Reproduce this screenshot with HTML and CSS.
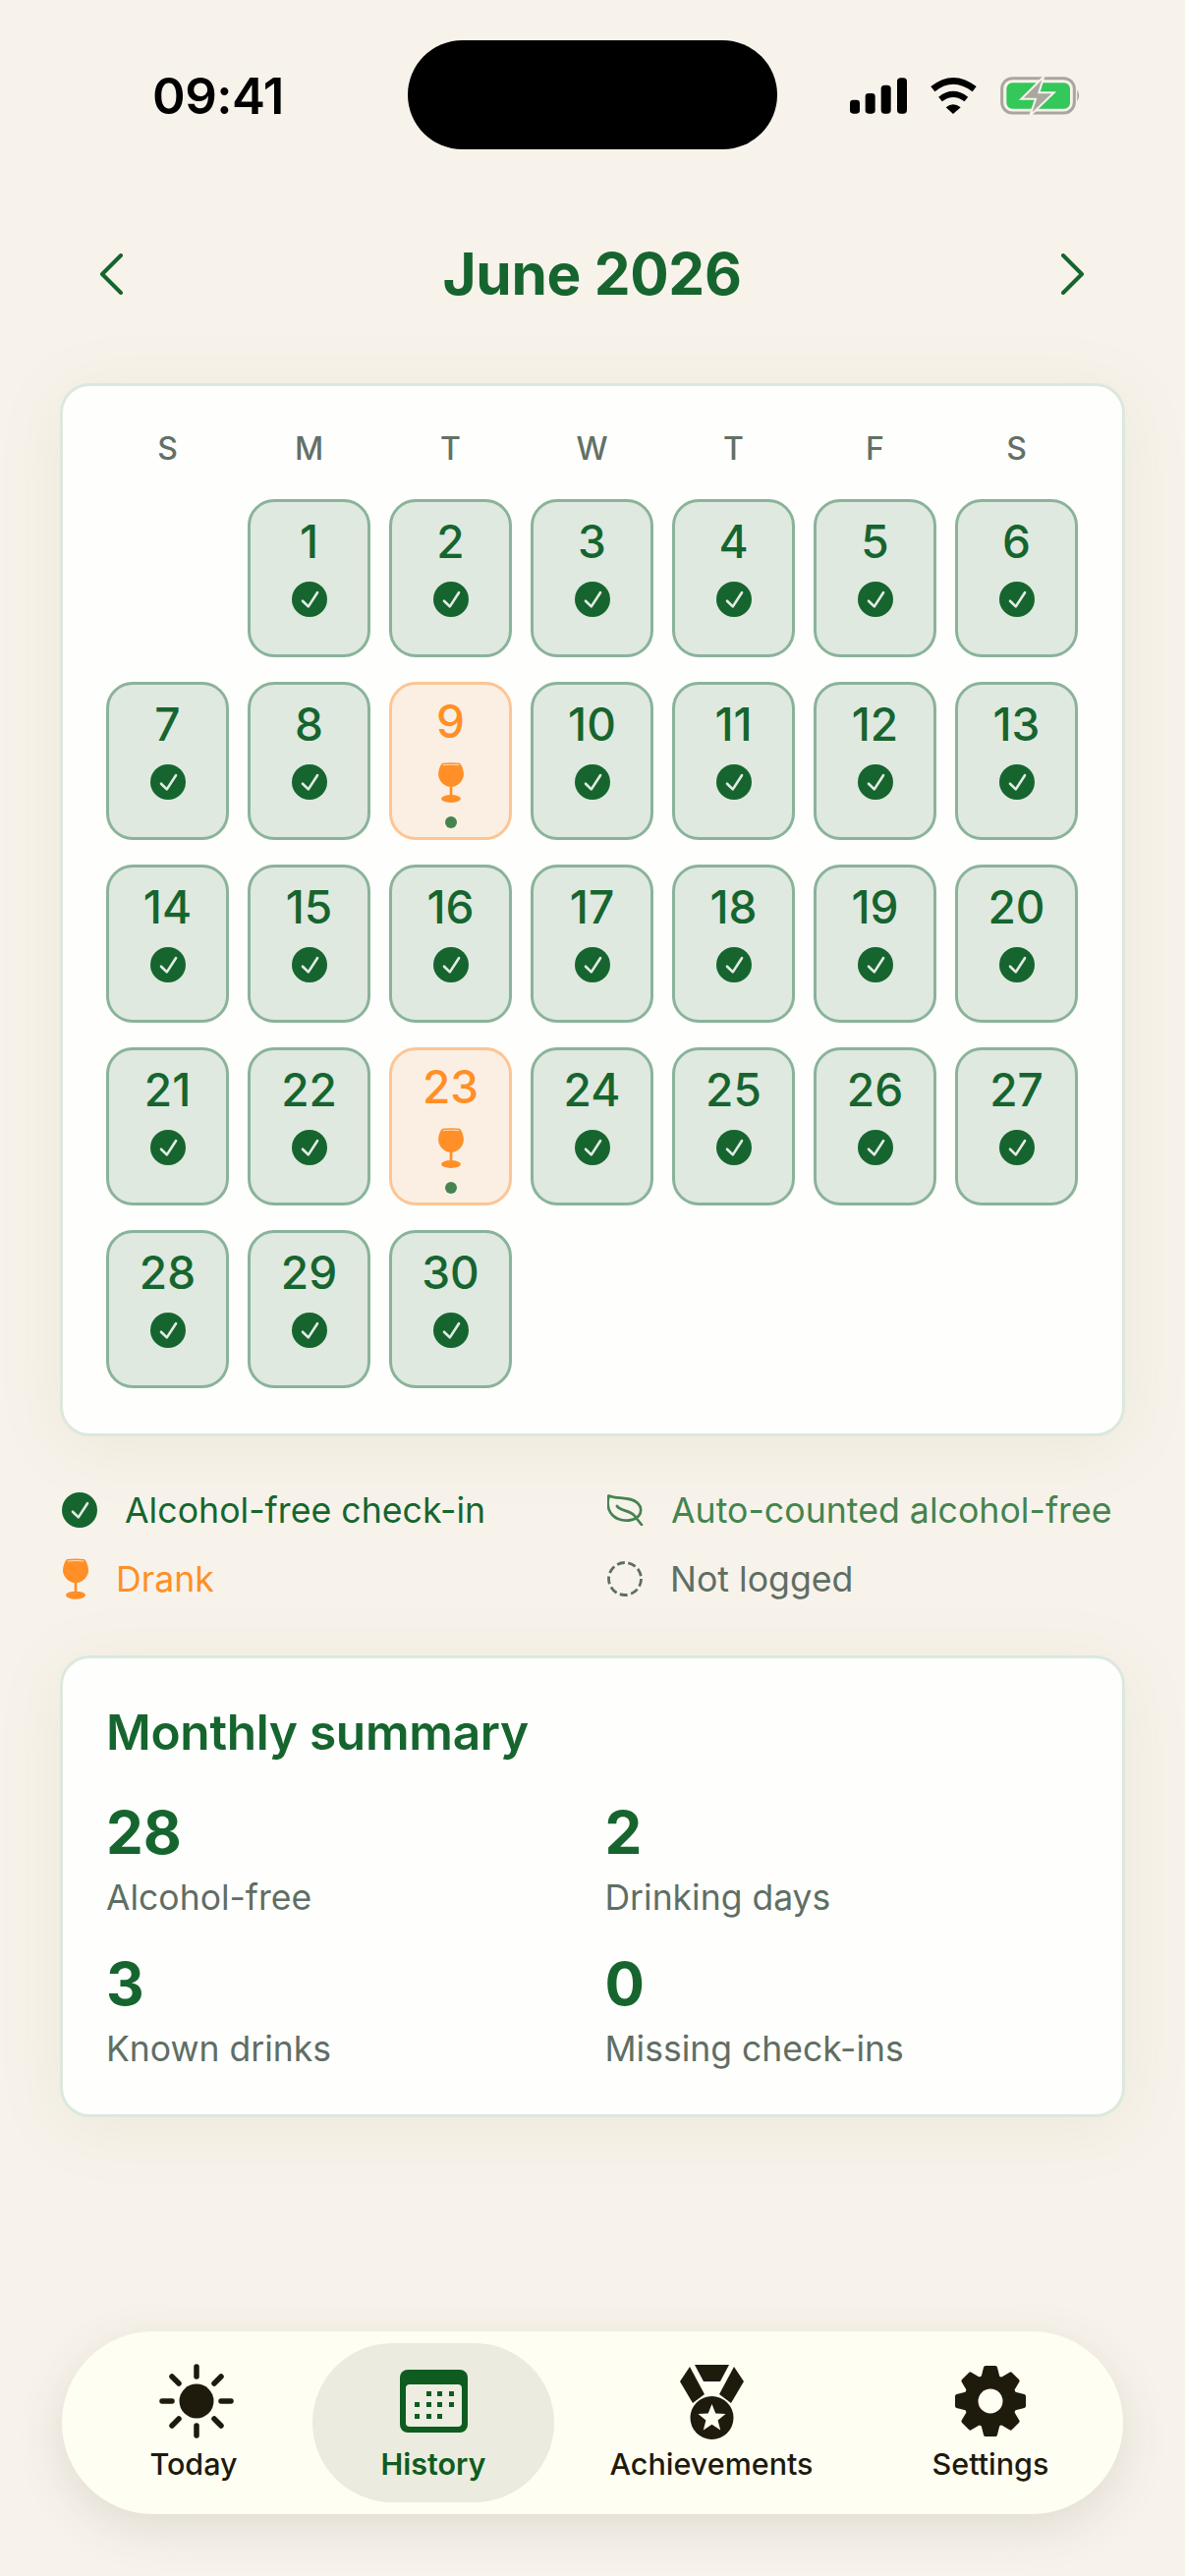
FILE: index.html
```html
<!DOCTYPE html>
<html lang="en">
<head>
<meta charset="utf-8">
<title>June 2026</title>
<link rel="stylesheet" href="styles.css">
</head>
<body>
<svg class="defs" width="0" height="0" aria-hidden="true">
  <symbol id="check" viewBox="-18 -18 36 36">
    <circle r="18" fill="#16652f"/>
    <path d="M-7 1.7 L-1.2 7.4 L8 -6.8" fill="none" stroke="#e3ece4" stroke-width="2.6" stroke-linecap="round" stroke-linejoin="round"/>
  </symbol>
  <symbol id="glass" viewBox="0 0 78 124">
    <path d="M12 2 Q39 -1 66 2 C73 10 78 24 78 36 C78 58 58 75 39 75 C20 75 0 58 0 36 C0 24 5 10 12 2 Z" fill="#ff8f26"/>
    <rect x="35" y="70" width="8" height="36" fill="#ff8f26"/>
    <ellipse cx="39" cy="112" rx="30" ry="12" fill="#ff8f26"/>
    <path d="M15 8 Q39 5 63 8" fill="none" stroke="#fdeedd" stroke-width="2.5" stroke-linecap="round"/>
  </symbol>
</svg>
<div class="phone">
  <header class="status">
    <span class="time">09:41</span>
    <div class="island"></div>
    <svg class="status-icons" viewBox="0 0 810 240">
      <rect x="75" y="155" width="30" height="42" rx="10"/>
      <rect x="122" y="135" width="30" height="62" rx="10"/>
      <rect x="170" y="110" width="30" height="87" rx="11"/>
      <rect x="219" y="88" width="30" height="109" rx="11"/>
      <path d="M328 122 Q390 72 455 122" fill="none" stroke="#000" stroke-width="20"/>
      <path d="M351 153 Q390 122 430 153" fill="none" stroke="#000" stroke-width="18"/>
      <path d="M368 178 Q390 160 413 178 L390 198 Z"/>
      <rect x="539" y="89" width="221" height="106" rx="32" fill="none" stroke="#a9a69e" stroke-width="9"/>
      <rect x="553" y="103" width="194" height="79" rx="18" fill="#34c759"/>
      <path d="M667 84 L598 152 L642 152 L625 203 L698 133 L652 133 Z" fill="#aaa79f" stroke="#f7f3eb" stroke-width="6"/>
      <path d="M769 124 Q780 142 769 160 Z" fill="#a9a69e"/>
    </svg>
  </header>

  <nav class="month">
    <svg class="chev" viewBox="0 0 24 42"><path d="M22 2 L3 21 L22 40"/></svg>
    <h1>June 2026</h1>
    <svg class="chev" viewBox="0 0 24 42"><path d="M2 2 L21 21 L2 40"/></svg>
  </nav>

  <section class="card cal">
    <div class="grid heads">
      <span>S</span><span>M</span><span>T</span><span>W</span><span>T</span><span>F</span><span>S</span>
    </div>
    <div class="grid days">
      <span></span>
      <div class="cell"><b>1</b><svg class="ck"><use href="#check"/></svg></div>
      <div class="cell"><b>2</b><svg class="ck"><use href="#check"/></svg></div>
      <div class="cell"><b>3</b><svg class="ck"><use href="#check"/></svg></div>
      <div class="cell"><b>4</b><svg class="ck"><use href="#check"/></svg></div>
      <div class="cell"><b>5</b><svg class="ck"><use href="#check"/></svg></div>
      <div class="cell"><b>6</b><svg class="ck"><use href="#check"/></svg></div>
      <div class="cell"><b>7</b><svg class="ck"><use href="#check"/></svg></div>
      <div class="cell"><b>8</b><svg class="ck"><use href="#check"/></svg></div>
      <div class="cell drank"><b>9</b><svg class="gl"><use href="#glass"/></svg><i class="dot"></i></div>
      <div class="cell"><b>10</b><svg class="ck"><use href="#check"/></svg></div>
      <div class="cell"><b>11</b><svg class="ck"><use href="#check"/></svg></div>
      <div class="cell"><b>12</b><svg class="ck"><use href="#check"/></svg></div>
      <div class="cell"><b>13</b><svg class="ck"><use href="#check"/></svg></div>
      <div class="cell"><b>14</b><svg class="ck"><use href="#check"/></svg></div>
      <div class="cell"><b>15</b><svg class="ck"><use href="#check"/></svg></div>
      <div class="cell"><b>16</b><svg class="ck"><use href="#check"/></svg></div>
      <div class="cell"><b>17</b><svg class="ck"><use href="#check"/></svg></div>
      <div class="cell"><b>18</b><svg class="ck"><use href="#check"/></svg></div>
      <div class="cell"><b>19</b><svg class="ck"><use href="#check"/></svg></div>
      <div class="cell"><b>20</b><svg class="ck"><use href="#check"/></svg></div>
      <div class="cell"><b>21</b><svg class="ck"><use href="#check"/></svg></div>
      <div class="cell"><b>22</b><svg class="ck"><use href="#check"/></svg></div>
      <div class="cell drank"><b>23</b><svg class="gl"><use href="#glass"/></svg><i class="dot"></i></div>
      <div class="cell"><b>24</b><svg class="ck"><use href="#check"/></svg></div>
      <div class="cell"><b>25</b><svg class="ck"><use href="#check"/></svg></div>
      <div class="cell"><b>26</b><svg class="ck"><use href="#check"/></svg></div>
      <div class="cell"><b>27</b><svg class="ck"><use href="#check"/></svg></div>
      <div class="cell"><b>28</b><svg class="ck"><use href="#check"/></svg></div>
      <div class="cell"><b>29</b><svg class="ck"><use href="#check"/></svg></div>
      <div class="cell"><b>30</b><svg class="ck"><use href="#check"/></svg></div>
    </div>
  </section>

  <section class="legend">
    <div class="lg lg-check"><svg class="ck"><use href="#check"/></svg><span>Alcohol-free check-in</span></div>
    <div class="lg lg-auto">
      <svg class="lg-ic" viewBox="0 0 37 32"><path d="M1.5 1.5 C10 5 24 2 31 9 C35 13 35 18 32 22 C27 27 18 28 11 25 C2 21 -1 12 1.5 1.5 Z M10 12 C13 17 22 16 27 21 L35 31"/></svg>
      <span>Auto-counted alcohol-free</span>
    </div>
    <div class="lg lg-drank"><svg class="gl-lg"><use href="#glass"/></svg><span>Drank</span></div>
    <div class="lg lg-none">
      <svg class="lg-ic2" viewBox="0 0 36 36"><circle cx="18" cy="18" r="16.5"/></svg>
      <span>Not logged</span>
    </div>
  </section>

  <section class="card summary">
    <h2>Monthly summary</h2>
    <div class="stats">
      <div><strong>28</strong><p>Alcohol-free</p></div>
      <div><strong>2</strong><p>Drinking days</p></div>
      <div><strong>3</strong><p>Known drinks</p></div>
      <div><strong>0</strong><p>Missing check-ins</p></div>
    </div>
  </section>

  <nav class="tabs">
    <a class="tab t-today">
      <svg class="tab-ic" width="76" height="76" viewBox="-38 -38 76 76">
        <circle r="17.5" fill="#1e1a0c"/>
        <g stroke="#1e1a0c" stroke-width="5.5" stroke-linecap="round">
          <path d="M0 -35 V-25 M0 35 V25 M-35 0 H-25 M35 0 H25 M-25 -25 L-18 -18 M25 -25 L18 -18 M-25 25 L-18 18 M25 25 L18 18"/>
        </g>
      </svg>
      <span>Today</span>
    </a>
    <a class="tab t-hist">
      <svg class="tab-ic" width="69" height="76" viewBox="0 -6 69 76">
        <rect width="69" height="64" rx="8" fill="#0f5c20"/>
        <rect x="6" y="15" width="57" height="43" rx="4" fill="#eeede2"/>
        <g fill="#0f5c20">
          <rect x="27" y="22" width="5" height="5"/><rect x="38" y="22" width="5" height="5"/><rect x="50" y="22" width="5" height="5"/>
          <rect x="15" y="33" width="5" height="5"/><rect x="27" y="33" width="5" height="5"/><rect x="38" y="33" width="5" height="5"/><rect x="50" y="33" width="5" height="5"/>
          <rect x="15" y="45" width="5" height="5"/><rect x="27" y="45" width="5" height="5"/><rect x="38" y="45" width="5" height="5"/>
        </g>
      </svg>
      <span>History</span>
    </a>
    <a class="tab t-ach">
      <svg class="tab-ic tab-ic-tall" width="65" height="78" viewBox="0 0 65 78">
        <g fill="#1e1a0c">
          <path d="M15 1 H50 L41 18 H24 Z"/>
          <path d="M10 3 L0 18 L13 40 L25 31 Z"/>
          <path d="M55 3 L65 18 L52 40 L40 31 Z"/>
          <circle cx="32.5" cy="55" r="22"/>
        </g>
        <path d="M32.5 41 L36.3 50.5 L46.5 51 L38.6 57.5 L41.2 67.4 L32.5 61.8 L23.8 67.4 L26.4 57.5 L18.5 51 L28.7 50.5 Z" fill="#fffef3"/>
      </svg>
      <span>Achievements</span>
    </a>
    <a class="tab t-set">
      <svg class="tab-ic" width="76" height="76" viewBox="-38 -38 76 76">
        <g fill="#1e1a0c" stroke="#1e1a0c" stroke-width="4" stroke-linejoin="round">
          <circle r="25"/>
          <path d="M-5 -34 H5 L8 -22 H-8 Z"/>
          <path d="M-5 -34 H5 L8 -22 H-8 Z" transform="rotate(45)"/>
          <path d="M-5 -34 H5 L8 -22 H-8 Z" transform="rotate(90)"/>
          <path d="M-5 -34 H5 L8 -22 H-8 Z" transform="rotate(135)"/>
          <path d="M-5 -34 H5 L8 -22 H-8 Z" transform="rotate(180)"/>
          <path d="M-5 -34 H5 L8 -22 H-8 Z" transform="rotate(225)"/>
          <path d="M-5 -34 H5 L8 -22 H-8 Z" transform="rotate(270)"/>
          <path d="M-5 -34 H5 L8 -22 H-8 Z" transform="rotate(315)"/>
        </g>
        <circle r="12.5" fill="#fffef3"/>
      </svg>
      <span>Settings</span>
    </a>
  </nav>
</div>
</body>
</html>
```
FILE: styles.css
```css
* { box-sizing: border-box; margin: 0; padding: 0; }
html, body { width: 1206px; height: 2622px; overflow: hidden; }
body {
  background: #f7f3eb;
  font-family: Inter, "Noto Sans", sans-serif;
  color: #16652f;
}
.defs { position: absolute; }
.phone {
  width: 1206px;
  height: 2622px;
  display: flex;
  flex-direction: column;
  position: relative;
}

/* status bar */
.status {
  height: 194px;
  position: relative;
  display: flex;
  align-items: center;
  justify-content: space-between;
  padding-left: 155px;
  padding-right: 96px;
  flex: none;
}
.time { font-size: 51px; font-weight: 600; color: #000; line-height: 60px; letter-spacing: -0.5px; margin-top: 2px; }
.island {
  position: absolute;
  left: 415px;
  top: 41px;
  width: 376px;
  height: 111px;
  border-radius: 56px;
  background: #000;
}
.status-icons { width: 270px; height: 80px; align-self: flex-start; margin-top: 50px; }

/* month header */
.month {
  height: 60px;
  margin-top: 55px;
  margin-bottom: 81px;
  padding: 0 102px 0 101px;
  display: flex;
  align-items: center;
  justify-content: space-between;
  flex: none;
}
.month h1 { font-size: 58.5px; font-weight: 700; line-height: 60px; color: #16652f; letter-spacing: -0.3px; }
.chev { width: 24px; height: 42px; fill: none; stroke: #16652f; stroke-width: 4; stroke-linecap: round; stroke-linejoin: round; }

/* cards */
.card {
  margin: 0 61px;
  width: 1084px;
  background: #fefefc;
  border: 3px solid #dce8dd;
  border-radius: 30px;
  box-shadow: 0 10px 70px rgba(120, 125, 40, 0.09);
  flex: none;
}
.cal { padding: 44px 44px 46px 44px; }
.grid {
  display: grid;
  grid-template-columns: repeat(7, 125px);
  column-gap: 19px;
}
.heads { height: 40px; margin-bottom: 31px; text-align: center; font-size: 32px; font-weight: 500; line-height: 40px; color: #627066; }
.days { row-gap: 25px; grid-auto-rows: 161px; }
.cell {
  background: #dfe9e0;
  border: 3px solid #8ab39a;
  border-radius: 27px;
  padding-top: 18px;
  display: flex;
  flex-direction: column;
  align-items: center;
}
.cell b { font-size: 46px; font-weight: 500; line-height: 44px; color: #16652f; }
.ck { width: 36px; height: 36px; margin-top: 19px; flex: none; }
.drank { background: #fbefe3; border-color: #fcc594; padding-top: 15px; }
.drank b { color: #ff8f26; }
.gl { width: 26px; height: 41px; margin-top: 20px; flex: none; }
.dot { width: 12px; height: 12px; border-radius: 50%; background: #46834f; margin-top: 14px; }

/* legend */
.legend {
  margin: 40px 0 43px 62px;
  display: grid;
  grid-template-columns: 556px auto;
  grid-auto-rows: 70px;
  font-size: 35.7px;
  flex: none;
}
.lg { display: flex; align-items: center; }
.lg-check { gap: 28px; color: #16652f; padding-left: 1px; }
.lg-check .ck { margin: 0; }
.lg-auto { gap: 28px; color: #46834f; }
.lg-ic { width: 37px; height: 32px; fill: none; stroke: #46834f; stroke-width: 2.8; stroke-linecap: round; stroke-linejoin: round; }
.lg-drank { gap: 28px; color: #ff8f26; padding-left: 2px; }
.gl-lg { width: 26px; height: 42px; flex: none; }
.lg-none { gap: 28px; color: #5f6e64; }
.lg-ic2 { width: 36px; height: 36px; fill: none; stroke: #5f6e64; stroke-width: 2.8; stroke-dasharray: 8 3.52; }

/* summary */
.summary { padding: 45px 40px 44px 44px; }
.summary h2 { font-size: 49.6px; font-weight: 600; line-height: 60px; color: #16652f; letter-spacing: -0.3px; margin-bottom: 37px; }
.stats { display: grid; grid-template-columns: 507.5px auto; row-gap: 30px; }
.stats strong { display: block; font-size: 60px; font-weight: 700; line-height: 70px; color: #16652f; }
.stats p { margin-top: 10px; font-size: 35.5px; line-height: 44px; color: #5f6e64; }

/* tab bar */
.tabs {
  margin: auto 63px 63px;
  width: 1080px;
  height: 186px;
  padding: 12px 11px 12px 19px;
  background: #fffef3;
  border-radius: 93px;
  box-shadow: 0 14px 50px rgba(70, 60, 30, 0.12);
  display: flex;
  flex: none;
}
.tab {
  display: flex;
  flex-direction: column;
  align-items: center;
  justify-content: flex-start;
  font-size: 30.5px;
  font-weight: 500;
  color: #1e1a0c;
  padding-top: 21px;
  line-height: 36px;
}
.tab-ic { flex: none; margin-bottom: 8px; }
.tab-ic-tall { margin-bottom: 6px; }
.t-today { width: 236px; }
.t-today span { margin-right: 6px; }
.t-hist { width: 246px; background: #ecebdf; border-radius: 82px; color: #0f5c20; font-weight: 600; }
.t-ach { width: 320px; }
.t-set { width: 248px; }
```
